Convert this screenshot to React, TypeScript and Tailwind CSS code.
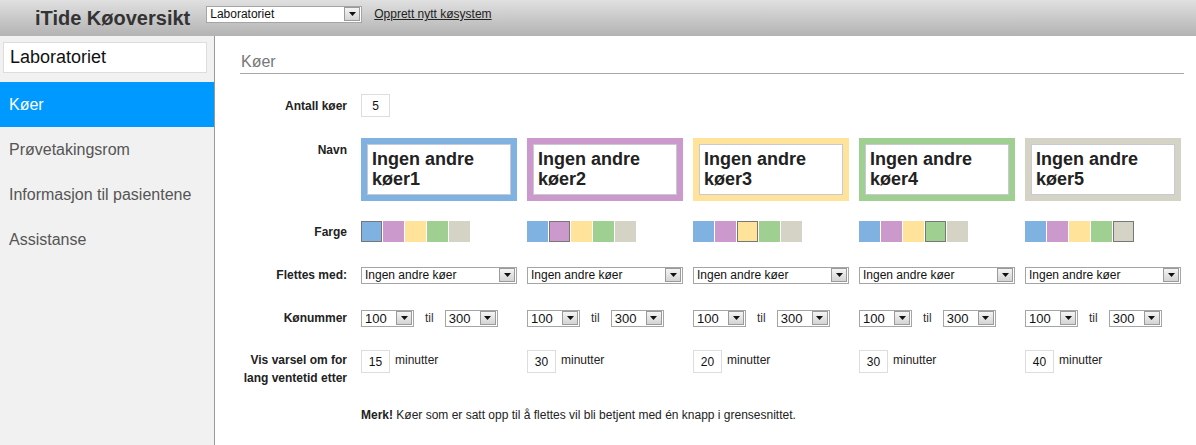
import React from 'react';

const swatches = ['#7fb2e0', '#cc99cc', '#ffe39a', '#a0cf92', '#d5d3c5'];

const queues = [
  { name: 'Ingen andre køer1', color: 0, from: '100', to: '300', warn: '15' },
  { name: 'Ingen andre køer2', color: 1, from: '100', to: '300', warn: '30' },
  { name: 'Ingen andre køer3', color: 2, from: '100', to: '300', warn: '20' },
  { name: 'Ingen andre køer4', color: 3, from: '100', to: '300', warn: '30' },
  { name: 'Ingen andre køer5', color: 4, from: '100', to: '300', warn: '40' },
];

const Arrow: React.FC = () => (
  <div className="w-[16px] h-[14px] mr-[1px] shrink-0 border border-[#9a9a9a] bg-gradient-to-b from-[#f4f4f4] to-[#d4d4d4] flex items-center justify-center">
    <svg width="7" height="4" viewBox="0 0 7 4">
      <path d="M0 0h7L3.5 4z" fill="#111" />
    </svg>
  </div>
);

const FakeSelect: React.FC<{ value: string; className: string; text?: string }> = ({ value, className, text = 'text-[12px]' }) => (
  <div className={`h-[17px] bg-white border border-[#a5a5a5] flex items-center justify-between pl-[3px] ${className}`}>
    <span className={`${text} leading-none text-[#111] whitespace-nowrap`}>{value}</span>
    <Arrow />
  </div>
);

const Label: React.FC<{ children: React.ReactNode; className?: string }> = ({ children, className = '' }) => (
  <div className={`w-[111px] pr-[4px] text-right text-[12px] font-bold text-[#222] ${className}`}>{children}</div>
);

const App: React.FC = () => {
  return (
    <div className="min-h-screen flex flex-col bg-white font-['Liberation_Sans',Arial,sans-serif]">
      {/* top bar */}
      <div className="h-[36px] shrink-0 flex items-center bg-gradient-to-b from-[#e0e0e0] to-[#b3b3b3] pl-[35px]">
        <span className="text-[20px] font-bold text-[#333] leading-none">iTide Køoversikt</span>
        <FakeSelect value="Laboratoriet" className="ml-[16px] w-[156px] mb-[8px]" />
        <a href="#" className="ml-[12px] mb-[8px] text-[12px] text-[#222] underline">Opprett nytt køsystem</a>
      </div>

      <div className="flex flex-1 min-h-[409px]">
        {/* sidebar */}
        <div className="w-[215px] shrink-0 bg-[#f1f1f1] border-r border-[#999]">
          <div className="mx-[3px] mt-[6px] w-[204px] h-[31px] bg-white border border-[#ddd] flex items-center pl-[6px] text-[18px] text-[#111]">
            Laboratoriet
          </div>
          <div className="mt-[9px]">
            <div className="h-[45px] flex items-center pl-[9px] bg-[#0099ff] text-white text-[16px]">Køer</div>
            <div className="h-[45px] flex items-center pl-[9px] text-[#555] text-[16px]">Prøvetakingsrom</div>
            <div className="h-[45px] flex items-center pl-[9px] text-[#555] text-[16px]">Informasjon til pasientene</div>
            <div className="h-[45px] flex items-center pl-[9px] text-[#555] text-[16px]">Assistanse</div>
          </div>
        </div>

        {/* main */}
        <div className="flex-1 pl-[25px] pr-[12px] pt-[16px]">
          <div className="border-b border-[#a9a9a9] pb-[1px] pl-[1px] text-[16px] leading-[20px] text-[#777]">Køer</div>

          <div className="flex items-center mt-[20px]">
            <Label>Antall køer</Label>
            <div className="ml-[10px] w-[29px] h-[23px] border border-[#ddd] flex items-center justify-center text-[12px] text-[#111]">5</div>
          </div>

          <div className="flex items-start mt-[21px]">
            <Label className="pt-[3px]">Navn</Label>
            <div className="ml-[10px] flex gap-[10px]">
              {queues.map((q) => (
                <div key={q.name} className="w-[156px] h-[63px] p-[6px]" style={{ backgroundColor: swatches[q.color] }}>
                  <div className="w-full h-full bg-white border border-[#c9c9d3] pl-[4px] pt-[4px] text-[18px] font-bold leading-[20px] text-[#222]">
                    {q.name}
                  </div>
                </div>
              ))}
            </div>
          </div>

          <div className="flex items-center mt-[20px]">
            <Label>Farge</Label>
            <div className="ml-[10px] flex gap-[10px]">
              {queues.map((q) => (
                <div key={q.name} className="w-[156px] flex gap-[1px]">
                  {swatches.map((c, i) => (
                    <div
                      key={c}
                      className={`w-[21px] h-[21px] ${i === q.color ? 'border border-[#777]' : ''}`}
                      style={{ backgroundColor: c }}
                    />
                  ))}
                </div>
              ))}
            </div>
          </div>

          <div className="flex items-center mt-[24px]">
            <Label>Flettes med:</Label>
            <div className="ml-[10px] flex gap-[10px]">
              {queues.map((q) => (
                <FakeSelect key={q.name} value="Ingen andre køer" className="w-[156px]" />
              ))}
            </div>
          </div>

          <div className="flex items-center mt-[25px]">
            <Label>Kønummer</Label>
            <div className="ml-[10px] flex gap-[10px]">
              {queues.map((q) => (
                <div key={q.name} className="w-[156px] flex items-center">
                  <FakeSelect value={q.from} className="w-[53px]" text="text-[13px]" />
                  <span className="ml-[11px] mr-[11px] text-[12px] text-[#333]">til</span>
                  <FakeSelect value={q.to} className="w-[53px]" text="text-[13px]" />
                </div>
              ))}
            </div>
          </div>

          <div className="flex items-start mt-[23px]">
            <Label className="leading-[18px] pt-[1px]">
              Vis varsel om for
              <br />
              lang ventetid etter
            </Label>
            <div className="ml-[10px] flex gap-[10px]">
              {queues.map((q) => (
                <div key={q.name} className="w-[156px] flex items-center">
                  <div className="w-[29px] h-[23px] border border-[#ddd] flex items-center justify-center text-[12px] text-[#111]">
                    {q.warn}
                  </div>
                  <span className="ml-[5px] text-[12px] text-[#222] -mt-[4px]">minutter</span>
                </div>
              ))}
            </div>
          </div>

          <div className="mt-[21px] ml-[121px] text-[12px] leading-[14px] text-[#222]">
            <b>Merk!</b> Køer som er satt opp til å flettes vil bli betjent med én knapp i grensesnittet.
          </div>
        </div>
      </div>
    </div>
  );
};

export default App;
